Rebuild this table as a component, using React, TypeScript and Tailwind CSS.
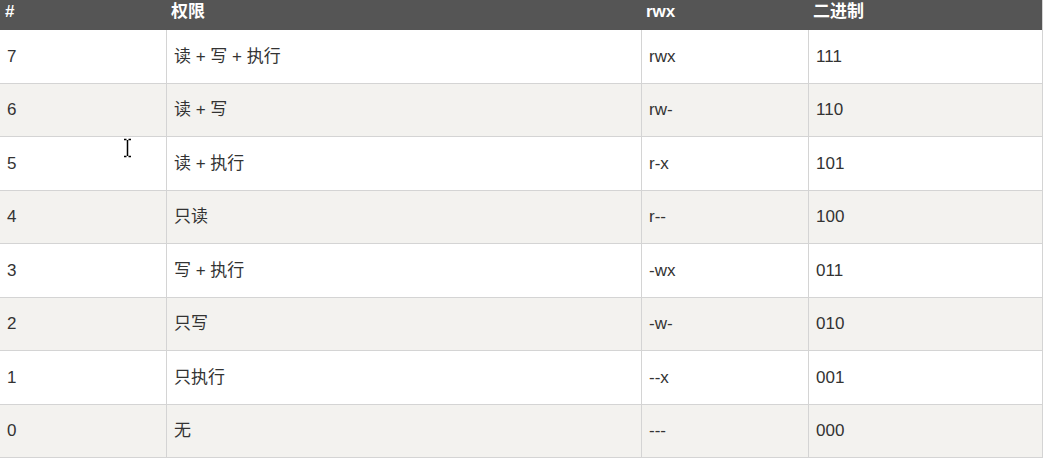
import React from "react";

const rows = [
  ["7", "读 + 写 + 执行", "rwx", "111"],
  ["6", "读 + 写", "rw-", "110"],
  ["5", "读 + 执行", "r-x", "101"],
  ["4", "只读", "r--", "100"],
  ["3", "写 + 执行", "-wx", "011"],
  ["2", "只写", "-w-", "010"],
  ["1", "只执行", "--x", "001"],
  ["0", "无", "---", "000"],
];

const headers = ["#", "权限", "rwx", "二进制"];

const App = () => {
  return (
    <div
      className="relative w-[1045px] h-[461px] bg-white text-[#333]"
      style={{ fontFamily: '"Liberation Sans", Arial, "Noto Sans CJK SC", sans-serif' }}
    >
      <div className="w-[1043px] border-r border-[#d4d4d4]">
        {/* header */}
        <div className="grid grid-cols-[166px_475px_167px_235px] h-[30px] bg-[#555555] text-white font-bold text-[17px] leading-[20px]">
          {headers.map((h) => (
            <div key={h} className="pl-[5px] pt-[2px]">
              {h}
            </div>
          ))}
        </div>

        {/* body */}
        {rows.map((r, i) => (
          <div
            key={r[0]}
            className={`grid grid-cols-[166px_475px_167px_235px] h-[53.5px] border-b border-[#d4d4d4] text-[17px] ${
              i % 2 === 1 ? "bg-[#f3f2ef]" : "bg-white"
            }`}
          >
            {r.map((c, j) => (
              <div
                key={j}
                className={`flex items-center pl-[7px] ${j > 0 ? "border-l border-[#d4d4d4]" : ""}`}
              >
                {c}
              </div>
            ))}
          </div>
        ))}
      </div>

      {/* text cursor */}
      <svg
        className="absolute left-[123px] top-[138px]"
        width="9"
        height="20"
        viewBox="0 0 9 20"
      >
        <path d="M1 1.5h2.5M5.5 1.5H8M4.5 2v16M1 18.5h2.5M5.5 18.5H8" stroke="#000" strokeWidth="1.5" fill="none" />
      </svg>
    </div>
  );
};

export default App;
